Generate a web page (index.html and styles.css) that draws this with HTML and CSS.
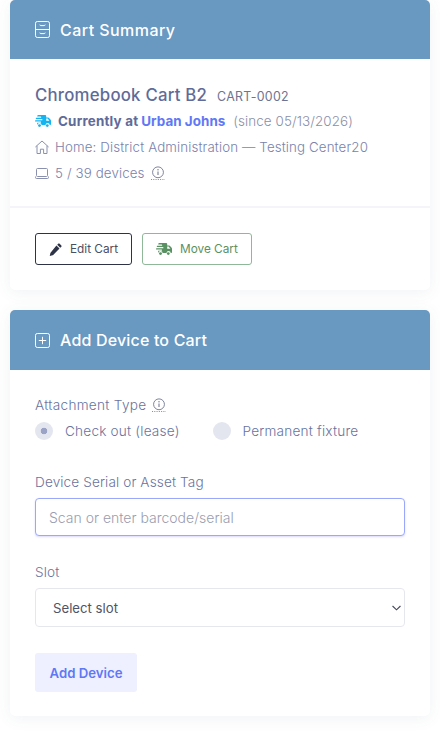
FILE: index.html
```html
<!DOCTYPE html>
<html lang="en">
<head>
    <meta charset="UTF-8" />
    <title>Cart Detail</title>
    <link rel="stylesheet" href="styles.css">
</head>
<body>

<!-- ===== Cart summary ===== -->
<section class="card card-summary">
    <header class="card-header">
        <svg class="head-icon" viewBox="0 0 15 17" fill="none" stroke="currentColor" stroke-width="1">
            <rect x=".5" y=".5" width="14" height="16" rx="1.8" />
            <line x1=".5" y1="8.5" x2="14.5" y2="8.5" />
            <path d="M4.8 3.6q0 1 1 1h3.4q1 0 1-1" />
            <path d="M4.8 11.6q0 1 1 1h3.4q1 0 1-1" />
        </svg>
        <h2>Cart Summary</h2>
    </header>
    <div class="summary-body">
        <div class="cart-title">
            <h3>Chromebook Cart B2</h3>
            <span class="cart-code">CART-0002</span>
        </div>
        <div class="cart-location">
            <svg class="truck truck-blue" viewBox="0 0 16 13" fill="currentColor">
                <path d="M3 0h7.2q1 0 1 1v1.4h1.6q.6 0 1 .4l1.6 1.7q.6.6.6 1.3v3.4q0 .8-.8.8h-.5a2.1 2.1 0 0 0-4.2 0H6.6a2.1 2.1 0 0 0-4.2 0H3q-.9 0-.9-.9V7.7h3.4a.6.6 0 0 0 0-1.2H.6a.6.6 0 0 1 0-1.2h6.2a.6.6 0 0 0 0-1.3H1.4a.6.6 0 0 1 0-1.2h4.2a.6.6 0 0 0 0-1.2H2.2Q2.2 0 3 0zM11.2 3.6v2.2h3.2L12.6 3.6z" />
                <circle cx="4.5" cy="10.6" r="1.4" />
                <circle cx="12.3" cy="10.6" r="1.4" />
            </svg>
            <strong>Currently at</strong>
            <a href="#" class="location-link">Urban Johns</a>
            <span class="since">(since 05/13/2026)</span>
        </div>
        <div class="meta-row">
            <svg class="meta-icon" viewBox="0 0 14 14" fill="none" stroke="currentColor" stroke-width="1">
                <path d="M.4 7 7 1l6.6 6" />
                <path d="M2 5.8v7.7h3.4V9.2h3.2v4.3H12V5.8" />
            </svg>
            <span>Home: District Administration — Testing Center20</span>
        </div>
        <div class="meta-row">
            <svg class="meta-icon" viewBox="0 0 14 14" fill="none" stroke="currentColor" stroke-width="1">
                <rect x="1.5" y="2.5" width="11" height="8" rx="1" />
                <path d="M.5 10.5v1q0 1 1 1h11q1 0 1-1v-1" />
            </svg>
            <span>5 / 39 devices</span>
            <svg class="info-icon" viewBox="0 0 16 16" fill="none" stroke="currentColor">
                <circle cx="8" cy="7.2" r="6.2" stroke-width="1" />
                <line x1="8" y1="6.4" x2="8" y2="10.2" stroke-width="1.2" />
                <circle cx="8" cy="4.3" r=".8" fill="currentColor" stroke="none" />
                <line x1="0" y1="15.5" x2="16" y2="15.5" stroke-width="1" stroke-dasharray="1.2 1.4" />
            </svg>
        </div>
    </div>
    <div class="summary-actions">
        <button class="btn btn-dark">
            <svg class="btn-icon" viewBox="0 0 14 14" fill="currentColor">
                <path d="M10 .7q.7-.6 1.4 0l1.9 1.9q.6.7 0 1.4l-1.2 1.2-3.3-3.3zM8 2.7l3.3 3.3-6.8 6.8q-.3.3-.7.4l-3 .7.7-3q.1-.4.4-.7z" />
            </svg>
            Edit Cart
        </button>
        <button class="btn btn-green">
            <svg class="truck" viewBox="0 0 16 13" fill="currentColor">
                <path d="M3 0h7.2q1 0 1 1v1.4h1.6q.6 0 1 .4l1.6 1.7q.6.6.6 1.3v3.4q0 .8-.8.8h-.5a2.1 2.1 0 0 0-4.2 0H6.6a2.1 2.1 0 0 0-4.2 0H3q-.9 0-.9-.9V7.7h3.4a.6.6 0 0 0 0-1.2H.6a.6.6 0 0 1 0-1.2h6.2a.6.6 0 0 0 0-1.3H1.4a.6.6 0 0 1 0-1.2h4.2a.6.6 0 0 0 0-1.2H2.2Q2.2 0 3 0zM11.2 3.6v2.2h3.2L12.6 3.6z" />
                <circle cx="4.5" cy="10.6" r="1.4" />
                <circle cx="12.3" cy="10.6" r="1.4" />
            </svg>
            Move Cart
        </button>
    </div>
</section>

<!-- ===== Add device ===== -->
<section class="card card-add">
    <header class="card-header">
        <svg class="head-icon head-icon-plus" viewBox="0 0 15 15" fill="none" stroke="currentColor" stroke-width="1">
            <rect x=".5" y=".5" width="14" height="14" rx="1.8" />
            <line x1="7.5" y1="3.8" x2="7.5" y2="11.2" />
            <line x1="3.8" y1="7.5" x2="11.2" y2="7.5" />
        </svg>
        <h2>Add Device to Cart</h2>
    </header>
    <form class="add-body">
        <div class="field-label attach-label">
            Attachment Type
            <svg class="info-icon" viewBox="0 0 16 16" fill="none" stroke="currentColor">
                <circle cx="8" cy="7.2" r="6.2" stroke-width="1" />
                <line x1="8" y1="6.4" x2="8" y2="10.2" stroke-width="1.2" />
                <circle cx="8" cy="4.3" r=".8" fill="currentColor" stroke="none" />
                <line x1="0" y1="15.5" x2="16" y2="15.5" stroke-width="1" stroke-dasharray="1.2 1.4" />
            </svg>
        </div>
        <div class="radio-group">
            <label class="radio"><input type="radio" name="attach" checked> Check out (lease)</label>
            <label class="radio"><input type="radio" name="attach"> Permanent fixture</label>
        </div>

        <label class="field-label" for="serial">Device Serial or Asset Tag</label>
        <input class="text-input" id="serial" type="text" placeholder="Scan or enter barcode/serial">

        <label class="field-label" for="slot">Slot</label>
        <select class="select-input" id="slot">
            <option>Select slot</option>
        </select>

        <button type="button" class="btn-add">Add Device</button>
    </form>
</section>

</body>
</html>
```

FILE: styles.css
```css
* { box-sizing: border-box; }

body {
    margin: 0;
    padding: 0 10px 17px;
    background: #fff;
    font-family: Inter, "Open Sans", sans-serif;
    color: #697a9c;
}

/* ────────── Cards ────────── */
.card {
    background: #fff;
    border-radius: 5px;
    overflow: hidden;
    box-shadow: 0 2px 16px rgba(67,89,113,.08);
}
.card-summary { height: 290px; margin-bottom: 20px; }
.card-add { height: 406px; }

.card-header {
    display: flex;
    align-items: center;
    height: 59px;
    padding: 0 25px;
    background: #6998c1;
    color: #fff;
}
.card-add .card-header { height: 60px; }
.card-header h2 {
    margin: 0;
    font-size: 16px;
    font-weight: 500;
    letter-spacing: .45px;
}
.card-add .card-header h2 { letter-spacing: .17px; }
.head-icon {
    width: 15px;
    height: 17px;
    margin-right: 10px;
}
.head-icon-plus { height: 15px; }

/* ────────── Summary ────────── */
.summary-body {
    height: 149px;
    padding: 24px 25px 0;
    border-bottom: 2px solid #f5f5f9;
}
.cart-title {
    display: flex;
    align-items: baseline;
    height: 24px;
    line-height: 24px;
    color: #5f6b99;
}
.cart-title h3 {
    margin: 0;
    font-size: 16.8px;
    font-weight: 500;
    letter-spacing: .22px;
}
.cart-code {
    margin-left: 10px;
    font-size: 12.4px;
    color: #6e7391;
    letter-spacing: .3px;
}
.cart-location {
    display: flex;
    align-items: center;
    height: 26px;
    margin-top: 1px;
    font-size: 13.4px;
    color: #5f6b99;
}
.cart-location strong { font-weight: 700; margin-left: 7px; letter-spacing: .2px; }
.location-link {
    margin-left: 3px;
    color: #5f78f5;
    font-weight: 700;
    letter-spacing: .05px;
    text-decoration: none;
}
.since {
    margin-left: 8px;
    color: #8a8fa8;
    font-weight: 300;
    letter-spacing: .09px;
}
.truck { width: 16px; height: 13px; flex: none; }
.truck-blue { color: #14b4f0; }

.meta-row {
    display: flex;
    align-items: center;
    height: 26px;
    font-size: 13.3px;
    letter-spacing: .13px;
    color: #7a82ab;
    font-weight: 300;
}
.meta-icon {
    width: 14px;
    height: 14px;
    margin-right: 6px;
    color: #8a90ae;
    flex: none;
}
.info-icon {
    width: 14px;
    height: 14px;
    margin-left: 6px;
    color: #6e7391;
    flex: none;
}

.summary-actions {
    display: flex;
    gap: 10px;
    padding: 25px 25px 0;
}
.btn {
    display: flex;
    align-items: center;
    height: 32px;
    padding: 0 13px;
    background: #fff;
    border-radius: 3px;
    font-family: inherit;
    font-size: 11.8px;
    white-space: nowrap;
}
.btn-dark {
    width: 97px;
    border: 1px solid #2e3347;
    color: #4a4e63;
}
.btn-green {
    width: 110px;
    border: 1px solid #8fb898;
    color: #5a9163;
}
.btn-icon { width: 13px; height: 13px; margin-right: 8px; color: #2e3347; flex: none; }
.btn-green .truck { margin-right: 8px; }

/* ────────── Add device form ────────── */
.add-body {
    display: flex;
    flex-direction: column;
    align-items: flex-start;
    padding: 27px 25px 0;
}
.field-label {
    display: flex;
    align-items: center;
    font-size: 13.6px;
    line-height: 16px;
    letter-spacing: .12px;
    color: #6a739e;
    font-weight: 300;
}
.attach-label { letter-spacing: .3px; }
.radio-group {
    display: flex;
    gap: 33px;
    margin-top: 9px;
    margin-bottom: 34px;
}
.radio {
    display: flex;
    align-items: center;
    font-size: 13.6px;
    letter-spacing: .2px;
    color: #6a739e;
    font-weight: 300;
}
.radio input {
    appearance: none;
    width: 18px;
    height: 18px;
    margin: 0 12px 0 0;
    border-radius: 50%;
    background: #e3e6ef;
}
.radio input:checked {
    background: radial-gradient(circle, #9aa3c6 0 3px, #e3e6ef 3.6px);
}

.text-input,
.select-input {
    width: 100%;
    height: 39px;
    margin-top: 8px;
    border-radius: 4px;
    background: #fff;
    font-family: inherit;
    font-size: 14px;
}
.text-input {
    height: 38px;
    padding: 0 13px;
    margin-bottom: 28px;
    border: 1px solid #9aa8fb;
    box-shadow: 0 1px 2px rgba(105,108,255,.25);
    outline: none;
    font-weight: 300;
}
.text-input::placeholder { color: #9a9db0; opacity: 1; }
.select-input {
    appearance: none;
    padding: 0 17px;
    border: 1px solid #e6e6ef;
    color: #4f5468;
    outline: none;
    font-size: 13.2px;
    background: #fff url("data:image/svg+xml,%3Csvg xmlns='http://www.w3.org/2000/svg' viewBox='0 0 10 6' fill='none' stroke='%23444a5c' stroke-width='1.3'%3E%3Cpath d='M.6.8 5 5 9.4.8'/%3E%3C/svg%3E") no-repeat right 3px center / 9px 6px;
}

.btn-add {
    width: 102px;
    height: 39px;
    margin-top: 26px;
    border: none;
    border-radius: 3px;
    background: #eef0ff;
    color: #5f78f5;
    font-family: inherit;
    font-size: 13.2px;
    font-weight: 600;
}
```
